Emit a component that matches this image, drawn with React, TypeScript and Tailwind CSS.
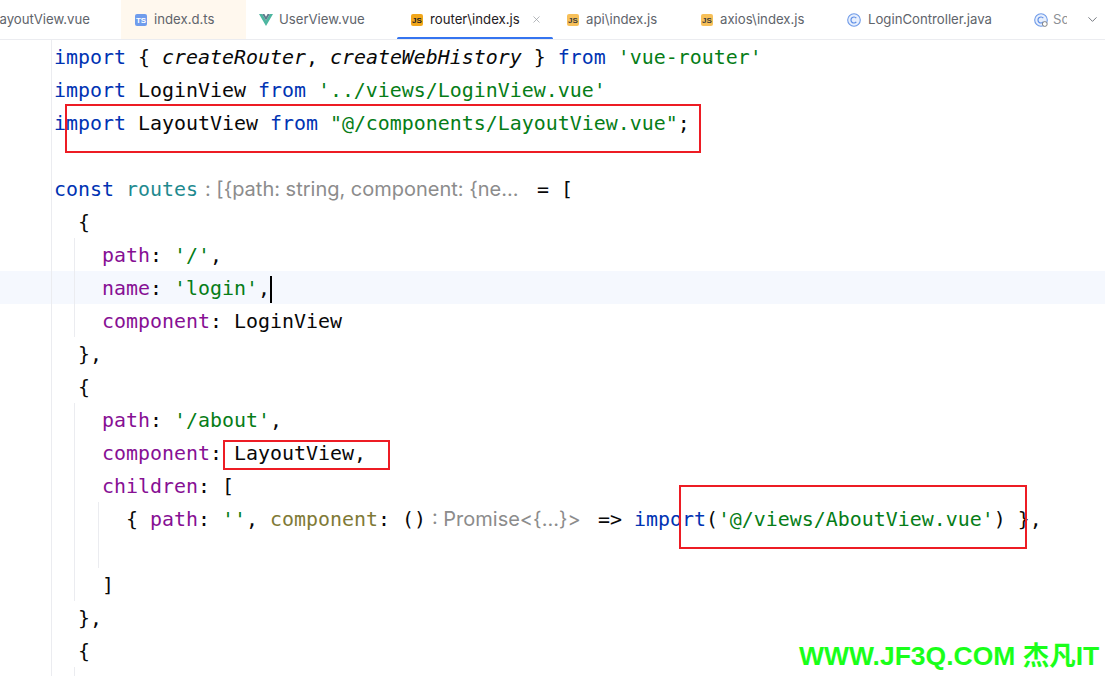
import type { ReactNode } from 'react';
import { ChevronDown, X } from 'lucide-react';

const KW = 'text-[#0033b3]';
const STR = 'text-[#067d17]';
const PROP = 'text-[#871094]';
const OLIVE = 'text-[#7f7a36]';
const HINT = "inline-block font-['Inter',sans-serif] text-[20px] text-[#8c8c8c]";

function FileBadge({ label, bg, fg = 'text-[#3b3b3b]' }: { label: string; bg: string; fg?: string }) {
  return (
    <span
      className={`flex h-[12px] w-[12px] shrink-0 items-end justify-center rounded-[2px] font-['Liberation_Sans',sans-serif] text-[8px] leading-[10px] font-bold ${bg} ${fg}`}
    >
      {label}
    </span>
  );
}

function VueIcon() {
  return (
    <svg width="14" height="12" viewBox="0 0 14 12" className="-mr-[1px] -ml-[1px] shrink-0">
      <path d="M0 0h3.2L7 6.4 10.8 0H14L7 12z" fill="#4db6a0" />
      <path d="M3.2 0h2.2L7 2.8 8.6 0h2.2L7 6.4z" fill="#5d7a8c" />
    </svg>
  );
}

function ClassIcon({ pointer = false }: { pointer?: boolean }) {
  return (
    <svg width="14" height="14" viewBox="0 0 14 14" className="shrink-0">
      <circle cx="7" cy="7" r="6.3" fill="#e7effd" stroke="#6f9be8" strokeWidth="1.1" />
      <path d="M9.3 5.1a3 3 0 1 0 0 3.8" fill="none" stroke="#5f8fe6" strokeWidth="1.2" />
      {pointer && <circle cx="10.8" cy="11" r="2.4" fill="#fff" stroke="#777" strokeWidth="0.9" />}
    </svg>
  );
}

function Tab({
  width,
  icon,
  label,
  bg = '',
  active = false,
}: {
  width: string;
  icon: ReactNode;
  label: string;
  bg?: string;
  active?: boolean;
}) {
  return (
    <div className={`relative flex h-full shrink-0 items-center gap-[7px] pl-[14px] ${width} ${bg}`}>
      {icon}
      <span className={`whitespace-nowrap ${active ? 'text-[#1f2024]' : 'text-[#60646b]'}`}>{label}</span>
      {active && (
        <>
          <X className="ml-[4px] h-[11px] w-[11px] text-[#9a9da3]" strokeWidth={1.6} />
          <span className="absolute right-0 bottom-[-1px] left-0 h-[3px] rounded-full bg-[#3574f0]" />
        </>
      )}
    </div>
  );
}

function TabBar() {
  return (
    <div className="flex h-[40px] items-stretch overflow-hidden border-b border-[#ebecf0] font-['Inter',sans-serif] text-[13.2px]">
      <div className="flex w-[121px] shrink-0 items-center justify-end pr-[31px] whitespace-nowrap text-[#60646b]">
        LayoutView.vue
      </div>
      <Tab width="w-[125px]" bg="bg-[#fff8ee]" icon={<FileBadge label="TS" bg="bg-[#6f9cec]" fg="text-white" />} label="index.d.ts" />
      <Tab width="w-[151px]" icon={<VueIcon />} label="UserView.vue" />
      <Tab width="w-[156px]" active icon={<FileBadge label="JS" bg="bg-[#f2a71b]" fg="text-[#222]" />} label="router\index.js" />
      <Tab width="w-[134px]" icon={<FileBadge label="JS" bg="bg-[#f7c059]" />} label="api\index.js" />
      <Tab width="w-[146px]" icon={<FileBadge label="JS" bg="bg-[#f7c059]" />} label="axios\index.js" />
      <Tab width="w-[188px]" icon={<ClassIcon />} label="LoginController.java" />
      <div className="flex shrink-0 items-center gap-[5px] pl-[13px]">
        <ClassIcon pointer />
        <span className="w-[14px] overflow-hidden text-[#8d9096]">Sc</span>
        <ChevronDown className="ml-[13px] h-[15px] w-[15px] text-[#6c7078]" strokeWidth={1.5} />
      </div>
    </div>
  );
}

function Line({
  pad,
  guideA = false,
  guideB = false,
  current = false,
  children,
}: {
  pad: string;
  guideA?: boolean;
  guideB?: boolean;
  current?: boolean;
  children?: ReactNode;
}) {
  return (
    <div className={`flex h-[33px] ${current ? 'bg-[#f5f8fe]' : ''}`}>
      <div className="w-[52px] shrink-0 border-r border-[#ebecf0]" />
      {guideA && <div className="w-[23px] shrink-0 border-r border-[#ebecf0]" />}
      {guideB && <div className="w-[24px] shrink-0 border-r border-[#ebecf0]" />}
      <div className={`pt-[4px] leading-[27px] whitespace-pre ${pad}`}>{children}</div>
    </div>
  );
}

function RedBox({ className }: { className: string }) {
  return <div className={`pointer-events-none absolute border-2 border-[#ed1c24] ${className}`} />;
}

export default function App() {
  return (
    <div className="relative h-[676px] w-[1105px] overflow-hidden bg-white">
      <TabBar />

      <div className="font-['DejaVu_Sans_Mono',monospace] text-[19.93px] text-[#080808]">
        <Line pad="pl-[2px]">
          <span className={KW}>import</span> {'{ '}
          <i>createRouter</i>, <i>createWebHistory</i> {'} '}
          <span className={KW}>from</span> <span className={STR}>'vue-router'</span>
        </Line>
        <Line pad="pl-[2px]">
          <span className={KW}>import</span> LoginView <span className={KW}>from</span>{' '}
          <span className={STR}>'../views/LoginView.vue'</span>
        </Line>
        <Line pad="pl-[2px]">
          <span className={KW}>import</span> LayoutView <span className={KW}>from</span>{' '}
          <span className={STR}>"@/components/LayoutView.vue"</span>;
        </Line>
        <Line pad="pl-[2px]" />
        <Line pad="pl-[2px]">
          <span className={KW}>const</span> <span className="text-[#1f8a8f]">routes</span>
          <span className={`${HINT} w-[339px] pl-[7px]`}>: [{'{'}path: string, component: {'{'}ne...</span>= [
        </Line>
        <Line pad="pl-[26px]">{'{'}</Line>
        <Line guideA pad="pl-[27px]">
          <span className={PROP}>path</span>: <span className={STR}>'/'</span>,
        </Line>
        <Line guideA current pad="pl-[27px]">
          <span className={PROP}>name</span>: <span className={STR}>'login'</span>,
          <span className="inline-block h-[27px] w-[2px] bg-black align-middle" />
        </Line>
        <Line guideA pad="pl-[27px]">
          <span className={PROP}>component</span>: LoginView
        </Line>
        <Line pad="pl-[26px]">{'},'}</Line>
        <Line pad="pl-[26px]">{'{'}</Line>
        <Line guideA pad="pl-[27px]">
          <span className={PROP}>path</span>: <span className={STR}>'/about'</span>,
        </Line>
        <Line guideA pad="pl-[27px]">
          <span className={PROP}>component</span>: LayoutView,
        </Line>
        <Line guideA pad="pl-[27px]">
          <span className={PROP}>children</span>: [
        </Line>
        <Line guideA guideB pad="pl-[27px]">
          {'{ '}
          <span className={PROP}>path</span>: <span className={STR}>''</span>, <span className={OLIVE}>component</span>: ()
          <span className={`${HINT} w-[172px] pl-[6px]`}>: Promise&lt;{'{'}...{'}'}&gt;</span>
          =&gt; <span className={KW}>import</span>(<span className={STR}>'@/views/AboutView.vue'</span>) {'},'}
        </Line>
        <Line guideA guideB pad="pl-[27px]" />
        <Line guideA pad="pl-[27px]">]</Line>
        <Line pad="pl-[26px]">{'},'}</Line>
        <Line pad="pl-[26px]">{'{'}</Line>
        <Line guideA pad="pl-[27px]">
          <span className={PROP}>path</span>: <span className={STR}>'/user'</span>,
        </Line>
      </div>

      <RedBox className="top-[104px] left-[65px] h-[49px] w-[636px]" />
      <RedBox className="top-[440px] left-[223px] h-[30px] w-[167px]" />
      <RedBox className="top-[485px] left-[679px] h-[64px] w-[348px]" />

      <div className="absolute top-[640px] left-[799px] font-['Liberation_Sans','Noto_Sans_CJK_SC',sans-serif] text-[26.5px] leading-[32px] font-bold whitespace-nowrap text-[#1aff1a]">
        WWW.JF3Q.COM 杰凡IT
      </div>
    </div>
  );
}
